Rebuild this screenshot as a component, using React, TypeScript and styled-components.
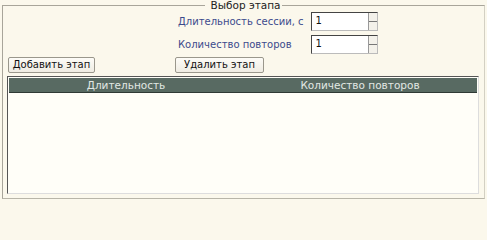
import React from 'react'
import styled, { createGlobalStyle } from 'styled-components'

const GlobalStyle = createGlobalStyle`
  html, body {
    margin: 0;
    padding: 0;
    background: #fbf8ec;
    height: 202px;
    overflow: hidden;
  }
  body {
    font-family: "DejaVu Sans", Verdana, sans-serif;
    font-size: 10px;
  }
`

const Page = styled.div`
  width: 487px;
  height: 202px;
  padding: 0 2px 3px 2px;
  box-sizing: border-box;
`

const Group = styled.fieldset`
  margin: 0;
  height: 100%;
  box-sizing: border-box;
  border: 1px solid #a8a59a;
  border-right-color: #d3d0c3;
  border-bottom-color: #b8b5a8;
  padding: 0 4px 4px 4px;
  display: flex;
  flex-direction: column;
  min-height: 0;
`

const Legend = styled.legend`
  margin-left: auto;
  margin-right: auto;
  padding: 0 3px;
  color: #222;
  font-size: 10.5px;
  line-height: 10px;
  position: relative;
  left: 2px;
`

const Form = styled.div`
  display: grid;
  grid-template-columns: auto 67px;
  column-gap: 7px;
  row-gap: 4px;
  align-items: center;
  margin-left: 171px;
  margin-top: 2px;
  width: max-content;
`

const Label = styled.span`
  color: #3b4b8c;
`

const Spin = styled.div`
  display: flex;
  height: 19px;
  border: 1px solid #444;
  border-right-color: #bbb;
  border-bottom-color: #bbb;
  background: #fff;
  box-sizing: border-box;
`

const SpinValue = styled.span`
  flex: 1;
  padding: 2px 4px;
  color: #111;
`

const SpinButtons = styled.div`
  width: 8px;
  display: flex;
  flex-direction: column;
  border-left: 1px solid #999;
`

const SpinBtn = styled.div`
  flex: 1;
  background: #f3f1ea;
  border-bottom: 1px solid #777;
  &:last-child {
    border-bottom: none;
  }
`

const Buttons = styled.div`
  display: flex;
  gap: 80px;
  margin-top: 3px;
  padding-left: 1px;
`

const Button = styled.button<{ $w: number }>`
  font-family: inherit;
  font-size: 10px;
  height: 16px;
  padding: 0;
  line-height: 14px;
  color: #111;
  background: linear-gradient(#fdfcf7, #efece2);
  border: 1px solid #9a978c;
  border-radius: 2px;
  white-space: nowrap;
  width: ${(p) => p.$w}px;
`

const Table = styled.div`
  margin-top: 3px;
  margin-right: 1px;
  flex: 1;
  min-height: 0;
  border: 1px solid #555;
  border-right-color: #ddd;
  border-bottom-color: #ddd;
  background: #fffef8;
  padding: 1px;
  display: flex;
  flex-direction: column;
`

const Header = styled.div`
  display: grid;
  grid-template-columns: 1fr 1fr;
  height: 14px;
  background: #586a62;
  border-bottom: 1px solid #2f3a35;
`

const HeaderCell = styled.div`
  color: #e2e8e4;
  text-align: center;
  line-height: 14px;
  font-size: 10.5px;
`

export default function App() {
  return (
    <Page>
      <GlobalStyle />
      <Group>
        <Legend>Выбор этапа</Legend>
        <Form>
          <Label>Длительность сессии, с</Label>
          <Spin>
            <SpinValue>1</SpinValue>
            <SpinButtons>
              <SpinBtn />
              <SpinBtn />
            </SpinButtons>
          </Spin>
          <Label>Количество повторов</Label>
          <Spin>
            <SpinValue>1</SpinValue>
            <SpinButtons>
              <SpinBtn />
              <SpinBtn />
            </SpinButtons>
          </Spin>
        </Form>
        <Buttons>
          <Button $w={87}>Добавить этап</Button>
          <Button $w={89}>Удалить этап</Button>
        </Buttons>
        <Table>
          <Header>
            <HeaderCell>Длительность</HeaderCell>
            <HeaderCell>Количество повторов</HeaderCell>
          </Header>
        </Table>
      </Group>
    </Page>
  )
}
